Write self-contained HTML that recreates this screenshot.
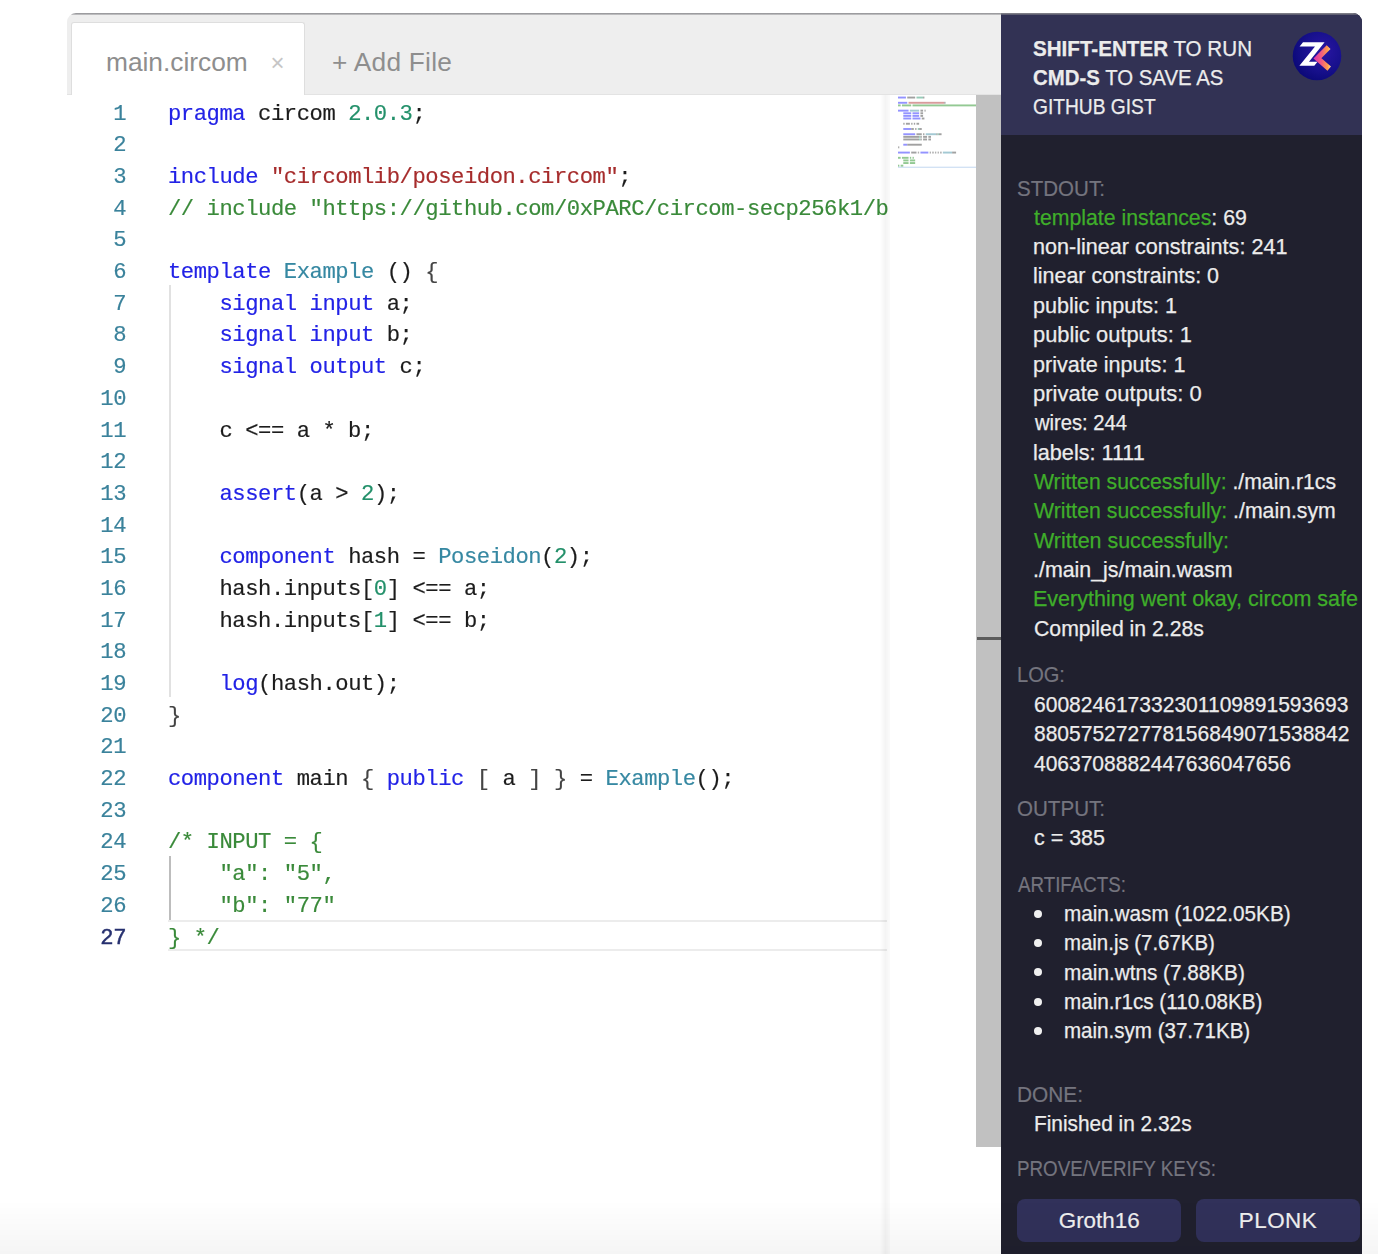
<!DOCTYPE html>
<html lang="en">
<head>
<meta charset="utf-8">
<title>zkREPL</title>
<style>
*{box-sizing:border-box;margin:0;padding:0}
html,body{width:1378px;height:1254px;overflow:hidden;background:#fff}
body{position:relative;font-family:"Liberation Sans",sans-serif}
#win{filter:blur(.45px);position:absolute;left:67px;top:13px;width:1295px;height:1260px;border-radius:9px 9px 0 0;overflow:hidden;background:#fff}
#topline{position:absolute;left:0;top:0;width:1295px;height:2px;background:linear-gradient(#8b8b8f,rgba(139,139,143,.35));z-index:9}
/* tab bar */
#tabs{position:absolute;left:0;top:0;width:934px;height:82.5px;background:#eeeeee;border-bottom:2px solid #e3e3e3}
#tab1{position:absolute;left:4px;top:8.5px;width:233.5px;height:75px;background:#fff;border:1px solid #dedede;border-bottom:none;border-radius:3px 3px 0 0}
.tabtxt{position:absolute;font-size:26.3px;line-height:30px;color:#8e8e8e;white-space:nowrap}
/* editor */
#editor{position:absolute;left:0;top:82px;width:936px;height:1180px;background:#fff;overflow:hidden}
.ln{position:absolute;left:0;width:59px;text-align:right;color:#3a829b;font-family:"Liberation Mono",monospace;font-size:22.2px;letter-spacing:-.45px;line-height:31.69px;height:31.69px}
.cl{position:absolute;left:101px;white-space:pre;color:#1c1c1c;font-family:"Liberation Mono",monospace;font-size:22.2px;letter-spacing:-.45px;line-height:31.69px;height:31.69px}
.k{color:#2222e6}.t{color:#3688a2}.n{color:#23906a}.s{color:#a62c2c}.c{color:#3a8a3a}.d{color:#444}
.guide{position:absolute;width:2px;background:#e1e1e1}

/* right panel */
#panel{position:absolute;left:934px;top:0;width:361px;height:1260px;background:#20202e;color:#f2f2f2;font-size:21.5px;overflow:hidden}
#phead{position:absolute;left:0;top:0;width:361px;height:122px;background:#323254}
.pl{transform-origin:0 50%;position:absolute;left:33px;white-space:nowrap;line-height:29.36px;height:29.36px;font-size:21.5px;color:#ececec;-webkit-text-stroke-width:.25px}
.lbl{transform-origin:0 50%;position:absolute;left:16px;white-space:nowrap;line-height:29.36px;height:29.36px;font-size:21.5px;color:#74747e;-webkit-text-stroke-width:.2px}
.g{color:#3fae2a}
.btn{position:absolute;top:1186px;height:42.8px;border-radius:8px;background:#31315a;color:#f0f0f0;font-size:22.4px;line-height:43.6px;text-align:center;-webkit-text-stroke-width:.2px}
.dot{position:absolute;left:33.4px;width:8px;height:8px;border-radius:50%;background:#f0f0f0}

/* editor decorations */
#curline{position:absolute;left:101px;top:825.3px;width:719px;height:30.7px;border-top:2.6px solid #ececec;border-bottom:2.6px solid #ececec}
#mmshadow{position:absolute;left:813px;top:0;width:10px;height:1180px;background:linear-gradient(90deg,rgba(0,0,0,0),rgba(0,0,0,.045) 55%,rgba(0,0,0,.015))}
#sbar{position:absolute;left:909px;top:0;width:25.5px;height:1052px;background:#c1c1c1}
#sbmark{position:absolute;left:909.5px;top:542.4px;width:24px;height:2.6px;background:#5c5c5c}
#minimap{position:absolute;left:831px;top:0;width:78px;height:80px}
#fade{position:absolute;left:0;top:1200px;width:1378px;height:54px;background:linear-gradient(rgba(0,0,0,0),rgba(0,0,0,.04));pointer-events:none}
.ln.act{color:#26306f;-webkit-text-stroke-width:.45px}
.cl,.ln{-webkit-text-stroke-width:.18px}
</style>
</head>
<body>
<div id="win">
  <div id="tabs">
    <div id="tab1"></div>
    <div class="tabtxt" style="left:39px;top:33.5px">main.circom</div>
    <div class="tabtxt" style="left:203.5px;top:35px;font-size:24px;color:#c6c6c6">×</div>
    <div class="tabtxt" style="left:265px;top:33.5px;letter-spacing:.25px">+ Add File</div>
  </div>
  <div id="editor">
<!--CODE-START-->
<div class="ln" style="top:3.6px">1</div>
<div class="cl" style="top:3.6px"><span class="k">pragma</span> circom <span class="n">2.0.3</span>;</div>
<div class="ln" style="top:35.29px">2</div>
<div class="ln" style="top:66.98px">3</div>
<div class="cl" style="top:66.98px"><span class="k">include</span> <span class="s">"circomlib/poseidon.circom"</span>;</div>
<div class="ln" style="top:98.67px">4</div>
<div class="cl" style="top:98.67px"><span class="c">// include "https://github.com/0xPARC/circom-secp256k1/b</span></div>
<div class="ln" style="top:130.36px">5</div>
<div class="ln" style="top:162.05px">6</div>
<div class="cl" style="top:162.05px"><span class="k">template</span> <span class="t">Example</span> () <span class="d">{</span></div>
<div class="ln" style="top:193.74px">7</div>
<div class="cl" style="top:193.74px">    <span class="k">signal</span> <span class="k">input</span> a;</div>
<div class="ln" style="top:225.43px">8</div>
<div class="cl" style="top:225.43px">    <span class="k">signal</span> <span class="k">input</span> b;</div>
<div class="ln" style="top:257.12px">9</div>
<div class="cl" style="top:257.12px">    <span class="k">signal</span> <span class="k">output</span> c;</div>
<div class="ln" style="top:288.81px">10</div>
<div class="ln" style="top:320.5px">11</div>
<div class="cl" style="top:320.5px">    c &lt;== a * b;</div>
<div class="ln" style="top:352.19px">12</div>
<div class="ln" style="top:383.88px">13</div>
<div class="cl" style="top:383.88px">    <span class="k">assert</span>(a &gt; <span class="n">2</span>);</div>
<div class="ln" style="top:415.57px">14</div>
<div class="ln" style="top:447.26px">15</div>
<div class="cl" style="top:447.26px">    <span class="k">component</span> hash = <span class="t">Poseidon</span>(<span class="n">2</span>);</div>
<div class="ln" style="top:478.95px">16</div>
<div class="cl" style="top:478.95px">    hash.inputs[<span class="n">0</span>] &lt;== a;</div>
<div class="ln" style="top:510.64px">17</div>
<div class="cl" style="top:510.64px">    hash.inputs[<span class="n">1</span>] &lt;== b;</div>
<div class="ln" style="top:542.33px">18</div>
<div class="ln" style="top:574.02px">19</div>
<div class="cl" style="top:574.02px">    <span class="k">log</span>(hash.out);</div>
<div class="ln" style="top:605.71px">20</div>
<div class="cl" style="top:605.71px"><span class="d">}</span></div>
<div class="ln" style="top:637.4px">21</div>
<div class="ln" style="top:669.09px">22</div>
<div class="cl" style="top:669.09px"><span class="k">component</span> main <span class="d">{</span> <span class="k">public</span> <span class="d">[</span> a <span class="d">]</span> <span class="d">}</span> = <span class="t">Example</span>();</div>
<div class="ln" style="top:700.78px">23</div>
<div class="ln" style="top:732.47px">24</div>
<div class="cl" style="top:732.47px"><span class="c">/* INPUT = {</span></div>
<div class="ln" style="top:764.16px">25</div>
<div class="cl" style="top:764.16px"><span class="c">    "a": "5",</span></div>
<div class="ln" style="top:795.85px">26</div>
<div class="cl" style="top:795.85px"><span class="c">    "b": "77"</span></div>
<div class="ln act" style="top:827.54px">27</div>
<div class="cl" style="top:827.54px"><span class="c">} */</span></div>
<!--CODE-END-->
<div class="guide" style="left:102px;top:190.3px;height:412px"></div>
<div class="guide" style="left:102px;top:761px;height:65px;background:#bdbdbd;width:2px"></div>
<div id="curline"></div>
<div id="mmshadow"></div>
<div id="minimap">
<!--MM-START-->
<svg width="78" height="80" viewBox="0 0 78 80" style="display:block"><g opacity=".42"><rect x="0.00" y="1.60" width="7.92" height="1.9" fill="#0000ff"/><rect x="9.24" y="1.60" width="7.92" height="1.9" fill="#222"/><rect x="18.48" y="1.60" width="6.60" height="1.9" fill="#098658"/><rect x="25.08" y="1.60" width="1.32" height="1.9" fill="#222"/><rect x="0.00" y="6.84" width="9.24" height="1.9" fill="#0000ff"/><rect x="10.56" y="6.84" width="35.64" height="1.9" fill="#a31515"/><rect x="46.20" y="6.84" width="1.32" height="1.9" fill="#222"/><rect x="0.00" y="9.46" width="2.64" height="1.9" fill="#008000"/><rect x="3.96" y="9.46" width="9.24" height="1.9" fill="#008000"/><rect x="14.52" y="9.46" width="63.48" height="1.9" fill="#008000"/><rect x="0.00" y="14.70" width="10.56" height="1.9" fill="#0000ff"/><rect x="11.88" y="14.70" width="9.24" height="1.9" fill="#267f99"/><rect x="22.44" y="14.70" width="2.64" height="1.9" fill="#222"/><rect x="26.40" y="14.70" width="1.32" height="1.9" fill="#444"/><rect x="5.28" y="17.32" width="7.92" height="1.9" fill="#0000ff"/><rect x="14.52" y="17.32" width="6.60" height="1.9" fill="#0000ff"/><rect x="22.44" y="17.32" width="2.64" height="1.9" fill="#222"/><rect x="5.28" y="19.94" width="7.92" height="1.9" fill="#0000ff"/><rect x="14.52" y="19.94" width="6.60" height="1.9" fill="#0000ff"/><rect x="22.44" y="19.94" width="2.64" height="1.9" fill="#222"/><rect x="5.28" y="22.56" width="7.92" height="1.9" fill="#0000ff"/><rect x="14.52" y="22.56" width="7.92" height="1.9" fill="#0000ff"/><rect x="23.76" y="22.56" width="2.64" height="1.9" fill="#222"/><rect x="5.28" y="27.80" width="1.32" height="1.9" fill="#222"/><rect x="7.92" y="27.80" width="3.96" height="1.9" fill="#222"/><rect x="13.20" y="27.80" width="1.32" height="1.9" fill="#222"/><rect x="15.84" y="27.80" width="1.32" height="1.9" fill="#222"/><rect x="18.48" y="27.80" width="2.64" height="1.9" fill="#222"/><rect x="5.28" y="33.04" width="7.92" height="1.9" fill="#0000ff"/><rect x="13.20" y="33.04" width="2.64" height="1.9" fill="#222"/><rect x="17.16" y="33.04" width="1.32" height="1.9" fill="#222"/><rect x="19.80" y="33.04" width="1.32" height="1.9" fill="#098658"/><rect x="21.12" y="33.04" width="2.64" height="1.9" fill="#222"/><rect x="5.28" y="38.28" width="11.88" height="1.9" fill="#0000ff"/><rect x="18.48" y="38.28" width="5.28" height="1.9" fill="#222"/><rect x="25.08" y="38.28" width="1.32" height="1.9" fill="#222"/><rect x="27.72" y="38.28" width="10.56" height="1.9" fill="#267f99"/><rect x="38.28" y="38.28" width="1.32" height="1.9" fill="#222"/><rect x="39.60" y="38.28" width="1.32" height="1.9" fill="#098658"/><rect x="40.92" y="38.28" width="2.64" height="1.9" fill="#222"/><rect x="5.28" y="40.90" width="15.84" height="1.9" fill="#222"/><rect x="21.12" y="40.90" width="1.32" height="1.9" fill="#098658"/><rect x="22.44" y="40.90" width="1.32" height="1.9" fill="#222"/><rect x="25.08" y="40.90" width="3.96" height="1.9" fill="#222"/><rect x="30.36" y="40.90" width="2.64" height="1.9" fill="#222"/><rect x="5.28" y="43.52" width="15.84" height="1.9" fill="#222"/><rect x="21.12" y="43.52" width="1.32" height="1.9" fill="#098658"/><rect x="22.44" y="43.52" width="1.32" height="1.9" fill="#222"/><rect x="25.08" y="43.52" width="3.96" height="1.9" fill="#222"/><rect x="30.36" y="43.52" width="2.64" height="1.9" fill="#222"/><rect x="5.28" y="48.76" width="3.96" height="1.9" fill="#0000ff"/><rect x="9.24" y="48.76" width="14.52" height="1.9" fill="#222"/><rect x="0.00" y="51.38" width="1.32" height="1.9" fill="#444"/><rect x="0.00" y="56.62" width="11.88" height="1.9" fill="#0000ff"/><rect x="13.20" y="56.62" width="5.28" height="1.9" fill="#222"/><rect x="19.80" y="56.62" width="1.32" height="1.9" fill="#444"/><rect x="22.44" y="56.62" width="7.92" height="1.9" fill="#0000ff"/><rect x="31.68" y="56.62" width="1.32" height="1.9" fill="#444"/><rect x="34.32" y="56.62" width="1.32" height="1.9" fill="#222"/><rect x="36.96" y="56.62" width="1.32" height="1.9" fill="#444"/><rect x="39.60" y="56.62" width="1.32" height="1.9" fill="#444"/><rect x="42.24" y="56.62" width="1.32" height="1.9" fill="#222"/><rect x="44.88" y="56.62" width="9.24" height="1.9" fill="#267f99"/><rect x="54.12" y="56.62" width="3.96" height="1.9" fill="#222"/><rect x="0.00" y="61.86" width="2.64" height="1.9" fill="#008000"/><rect x="3.96" y="61.86" width="6.60" height="1.9" fill="#008000"/><rect x="11.88" y="61.86" width="1.32" height="1.9" fill="#008000"/><rect x="14.52" y="61.86" width="1.32" height="1.9" fill="#008000"/><rect x="5.28" y="64.48" width="5.28" height="1.9" fill="#008000"/><rect x="11.88" y="64.48" width="5.28" height="1.9" fill="#008000"/><rect x="5.28" y="67.10" width="5.28" height="1.9" fill="#008000"/><rect x="11.88" y="67.10" width="5.28" height="1.9" fill="#008000"/><rect x="0.00" y="69.72" width="1.32" height="1.9" fill="#008000"/><rect x="2.64" y="69.72" width="2.64" height="1.9" fill="#008000"/></g><rect x="0" y="71.72" width="78" height="1" fill="#7aa7e0" opacity=".45"/></svg>
<!--MM-END-->
</div>
<div id="sbar"></div>
<div id="sbmark"></div>
  </div>
  <div id="panel">
    <div id="phead"></div>
<svg id="logo" width="50" height="50" viewBox="-1 -1 50 50" style="position:absolute;left:291px;top:18px">
<defs>
<radialGradient id="lg1" cx="0.62" cy="0.4" r="0.75"><stop offset="0" stop-color="#2a16a4"/><stop offset=".55" stop-color="#17108c"/><stop offset="1" stop-color="#060670"/></radialGradient>
<linearGradient id="lg2" x1="22" y1="0" x2="38" y2="0" gradientUnits="userSpaceOnUse"><stop offset="0" stop-color="#e23aa8"/><stop offset=".45" stop-color="#f4627a"/><stop offset=".8" stop-color="#ffa04a"/><stop offset="1" stop-color="#ffd9a0"/></linearGradient>
</defs>
<circle cx="24" cy="24" r="24.3" fill="url(#lg1)"/>
<path d="M10 10.2 L31.6 10.2 L16 29.7 L24.5 29.7 L21.3 33.8 L6.4 33.8 L22 14.4 L6.6 14.4 Z" fill="#fff"/>
<path d="M35.6 15.2 L24.4 26.4 L36.2 36.6" fill="none" stroke="url(#lg2)" stroke-width="5.4" stroke-linejoin="miter"/>
</svg>
<!--PANEL-START-->
<div class="pl" style="top:22px;left:32.4px;transform:scaleX(0.9582)"><b>SHIFT-ENTER</b> TO RUN</div>
<div class="pl" style="top:51px;left:32.4px;transform:scaleX(0.9485)"><b>CMD-S</b> TO SAVE AS</div>
<div class="pl" style="top:80px;left:32.4px;transform:scaleX(0.8925)">GITHUB GIST</div>
<div class="lbl" style="top:162px;left:15.6px;transform:scaleX(0.9553)">STDOUT:</div>
<div class="pl" style="top:191px;left:33.0px;transform:scaleX(0.9891)"><span class="g">template instances</span>: 69</div>
<div class="pl" style="top:220px;left:32.0px;transform:scaleX(1.0041)">non-linear constraints: 241</div>
<div class="pl" style="top:249px;left:32.0px;transform:scaleX(0.9977)">linear constraints: 0</div>
<div class="pl" style="top:279px;left:32.0px;transform:scaleX(1.0040)">public inputs: 1</div>
<div class="pl" style="top:308px;left:32.0px;transform:scaleX(1.0154)">public outputs: 1</div>
<div class="pl" style="top:338px;left:32.0px;transform:scaleX(1.0042)">private inputs: 1</div>
<div class="pl" style="top:367px;left:32.0px;transform:scaleX(1.0223)">private outputs: 0</div>
<div class="pl" style="top:396px;left:34.0px;transform:scaleX(0.9390)">wires: 244</div>
<div class="pl" style="top:426px;left:32.0px;transform:scaleX(1.0058)">labels: 1111</div>
<div class="pl" style="top:455px;left:33.0px;transform:scaleX(0.9847)"><span class="g">Written successfully:</span> ./main.r1cs</div>
<div class="pl" style="top:484px;left:33.0px;transform:scaleX(0.9880)"><span class="g">Written successfully:</span> ./main.sym</div>
<div class="pl" style="top:514px;left:33.0px;transform:scaleX(0.9972)"><span class="g">Written successfully:</span></div>
<div class="pl" style="top:543px;left:32.0px;transform:scaleX(0.9944)">./main_js/main.wasm</div>
<div class="pl" style="top:572px;left:32.0px;transform:scaleX(1.0012)"><span class="g">Everything went okay, circom safe</span></div>
<div class="pl" style="top:602px;left:33.0px;transform:scaleX(0.9877)">Compiled in 2.28s</div>
<div class="lbl" style="top:648px;left:15.6px;transform:scaleX(0.9327)">LOG:</div>
<div class="pl" style="top:678px;left:33.0px;transform:scaleX(0.9786)">600824617332301109891593693</div>
<div class="pl" style="top:707px;left:33.0px;transform:scaleX(0.9769)">880575272778156849071538842</div>
<div class="pl" style="top:737px;left:33.0px;transform:scaleX(0.9762)">4063708882447636047656</div>
<div class="lbl" style="top:782px;left:15.6px;transform:scaleX(0.9572)">OUTPUT:</div>
<div class="pl" style="top:811px;left:33.0px;transform:scaleX(0.9982)">c = 385</div>
<div class="lbl" style="top:858px;left:16.6px;transform:scaleX(0.8721)">ARTIFACTS:</div>
<div class="pl" style="top:887px;left:63.4px;transform:scaleX(0.9626)">main.wasm (1022.05KB)</div>
<div class="pl" style="top:916px;left:63.4px;transform:scaleX(0.9489)">main.js (7.67KB)</div>
<div class="pl" style="top:946px;left:63.4px;transform:scaleX(0.9638)">main.wtns (7.88KB)</div>
<div class="pl" style="top:975px;left:63.4px;transform:scaleX(0.9615)">main.r1cs (110.08KB)</div>
<div class="pl" style="top:1004px;left:63.4px;transform:scaleX(0.9561)">main.sym (37.71KB)</div>
<div class="lbl" style="top:1068px;left:15.8px;transform:scaleX(0.9702)">DONE:</div>
<div class="pl" style="top:1097px;left:32.6px;transform:scaleX(0.9696)">Finished in 2.32s</div>
<div class="lbl" style="top:1142px;left:15.6px;transform:scaleX(0.8736)">PROVE/VERIFY KEYS:</div>
<div class="dot" style="top:896.6px"></div>
<div class="dot" style="top:926.0px"></div>
<div class="dot" style="top:955.4px"></div>
<div class="dot" style="top:984.8px"></div>
<div class="dot" style="top:1014.2px"></div>
<div class="btn" style="left:16.3px;width:163.8px">Groth16</div>
<div class="btn" style="left:195px;width:164px;letter-spacing:.5px">PLONK</div>
<!--PANEL-END-->
  </div>
  <div id="topline"></div>
</div>
<div id="fade"></div>
</body>
</html>
